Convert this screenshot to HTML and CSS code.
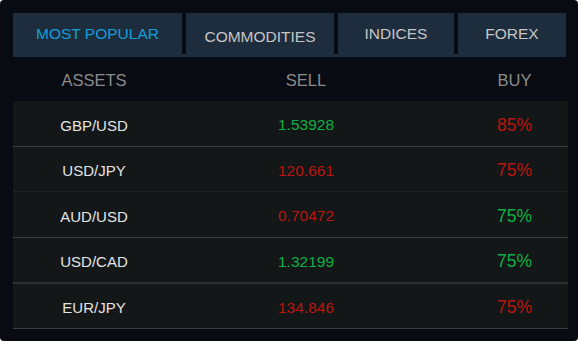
FILE: index.html
```html
<!DOCTYPE html>
<html lang="en">
<head>
  <meta charset="UTF-8" />
  <meta name="viewport" content="width=device-width, initial-scale=1.0" />
  <title>Trading Assets</title>
  <link rel="stylesheet" href="styles.css">
</head>
<body>
  <div class="panel">
    <div class="tabs">
      <div class="tab tab-active tab-popular">MOST POPULAR</div>
      <div class="tab tab-commodities">COMMODITIES</div>
      <div class="tab tab-indices">INDICES</div>
      <div class="tab tab-forex">FOREX</div>
    </div>

    <div class="head">
      <span>ASSETS</span>
      <span>SELL</span>
      <span class="buy">BUY</span>
    </div>

    <div class="rows">
      <div class="row">
        <span class="asset">GBP/USD</span>
        <span class="sell up">1.53928</span>
        <span class="buy pct down">85%</span>
      </div>
      <div class="row">
        <span class="asset">USD/JPY</span>
        <span class="sell down">120.661</span>
        <span class="buy pct down">75%</span>
      </div>
      <div class="row">
        <span class="asset">AUD/USD</span>
        <span class="sell down">0.70472</span>
        <span class="buy pct up">75%</span>
      </div>
      <div class="row">
        <span class="asset">USD/CAD</span>
        <span class="sell up">1.32199</span>
        <span class="buy pct up">75%</span>
      </div>
      <div class="row">
        <span class="asset">EUR/JPY</span>
        <span class="sell down">134.846</span>
        <span class="buy pct down">75%</span>
      </div>
    </div>
  </div>
</body>
</html>
```

FILE: styles.css
```css
body {
  margin: 0;
  background: #fff;
  font-family: "Liberation Sans", Arial, sans-serif;
}
.panel {
  width: 578px;
  height: 341px;
  box-sizing: border-box;
  padding: 13px 10px 0 13px;
  background: #080c12;
  border-radius: 4px;
}
/* tab strip, the bottom border joins the tabs together */
.tabs {
  display: flex;
  gap: 4px;
  width: 553px;
  border-bottom: 3px solid #1e2d3d;
}
.tab {
  height: 41px;
  background: #1e2d3d;
  color: #c6c6c6;
  font-size: 15.5px;
  display: flex;
  align-items: center;
  justify-content: center;
}
.tab-active {
  color: #129fd8;
}
.tab-popular { width: 169px; }
.tab-commodities { width: 148px; padding-top: 6px; box-sizing: border-box; }
.tab-indices { width: 116px; }
.tab-forex { width: 108px; }

.head,
.row {
  display: grid;
  grid-template-columns: 162px 262px 1fr;
  align-items: center;
  text-align: center;
}
.head {
  height: 44px;
  padding-top: 3px;
  box-sizing: border-box;
  color: #8b8b8b;
  font-size: 16.5px;
}
.rows {
  width: 555px;
}
.row {
  height: 46px;
  padding-top: 3px;
  box-sizing: border-box;
  background: #141718;
  border-bottom: 1px solid #3a3c3c;
}
.row:nth-child(2) { height: 45px; border-bottom-color: #202323; }
.row:nth-child(4) { border-bottom: 2px solid #2c2f2f; }
.row:nth-child(5) { height: 45px; }
.buy {
  padding-left: 24px;
}
.asset {
  color: #e4e4e4;
  font-size: 15px;
}
.sell {
  font-size: 15.5px;
}
.pct {
  font-size: 17.5px;
}
.up { color: #0db143; }
.down { color: #b8160e; }
```
